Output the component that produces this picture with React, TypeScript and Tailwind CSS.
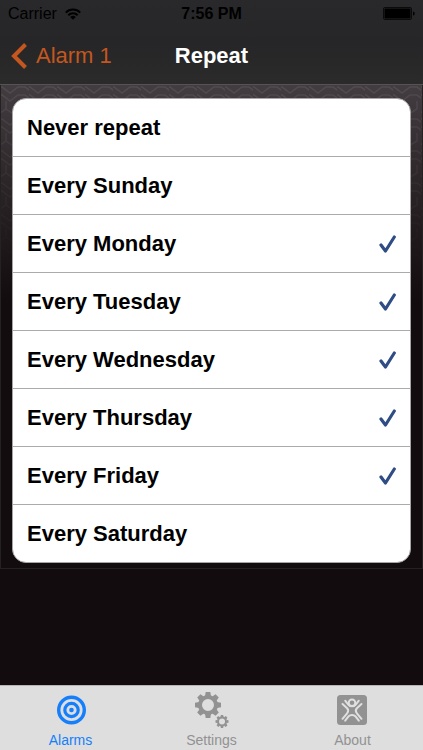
import { useState } from "react";
import type { ReactNode } from "react";

const OPTIONS = [
  "Never repeat",
  "Every Sunday",
  "Every Monday",
  "Every Tuesday",
  "Every Wednesday",
  "Every Thursday",
  "Every Friday",
  "Every Saturday",
];

const WifiIcon = () => (
  <svg className="h-3 w-4" viewBox="0 0 16 12" fill="none" stroke="#000" strokeWidth="2" aria-hidden="true">
    <path d="M.8 4.6a10.2 10.2 0 0 1 14.4 0" />
    <path d="M3.3 7.3a6.7 6.7 0 0 1 9.4 0" />
    <path d="M8 11.8 5.2 9a4 4 0 0 1 5.6 0z" fill="#000" stroke="none" />
  </svg>
);

const BatteryIcon = () => (
  <svg className="h-3.5 w-8" viewBox="0 0 32 14" aria-hidden="true">
    <rect x=".5" y=".5" width="28" height="12" rx="1.5" fill="none" stroke="#0b0b0b" />
    <rect x="1.5" y="1.5" width="26" height="10" rx="1" />
    <path d="M30 4.5c2.2 0 2.2 4 0 4z" />
  </svg>
);

const CheckIcon = () => (
  <svg
    className="h-5 w-4.5 opacity-0 peer-checked:opacity-100"
    viewBox="0 0 18 20"
    fill="none"
    stroke="#2f4d84"
    strokeWidth="3.2"
    strokeLinecap="round"
    strokeLinejoin="round"
    aria-hidden="true"
  >
    <path d="M3 11 7.5 17 16.3 3" />
  </svg>
);

const AlarmsIcon = () => (
  <svg className="size-9" viewBox="0 0 36 36" fill="none" stroke="currentColor" aria-hidden="true">
    <circle cx="18.5" cy="18" r="12.8" strokeWidth="3.4" />
    <circle cx="18.5" cy="18" r="6.7" strokeWidth="3.2" />
    <circle cx="18.5" cy="18" r="2.3" fill="currentColor" stroke="none" />
  </svg>
);

const TEETH = [0, 45, 90, 135, 180, 225, 270, 315];

const Gear = ({ cx, cy, scale }: { cx: number; cy: number; scale: number }) => (
  <g transform={`translate(${cx} ${cy}) scale(${scale})`}>
    <circle r="8" fill="none" stroke="currentColor" strokeWidth="4" />
    {TEETH.map((angle) => (
      <path key={angle} d="M-3-9 -2.3-13H2.3L3-9z" fill="currentColor" transform={`rotate(${angle})`} />
    ))}
  </g>
);

const SettingsIcon = () => (
  <svg className="size-9" viewBox="0 0 36 36" aria-hidden="true">
    <Gear cx={14} cy={13} scale={1} />
    <Gear cx={28} cy={29.5} scale={0.5} />
  </svg>
);

const AboutIcon = () => (
  <svg className="size-9" viewBox="0 0 36 36" fill="none" stroke="#e0e0e0" strokeWidth="2" strokeLinecap="round" strokeLinejoin="round" aria-hidden="true">
    <rect x="2" y="3" width="30" height="30" rx="3.5" fill="#929292" stroke="none" />
    <circle cx="17" cy="10.8" r="3.3" />
    <path d="M10.2 8.7l3.3 4.1c1.7 2 5.3 2 7 0l3.3-4.1" />
    <path d="M7.5 12l4.6 4.2c1.3 1.5 1.3 3.6 0 5.1L7.5 26.8" />
    <path d="M26.5 12l-4.6 4.2c-1.3 1.5-1.3 3.6 0 5.1l4.6 5.5" />
    <path d="M10.2 28.6l3.3-4.2c1.7-2 5.3-2 7 0l3.3 4.2" />
  </svg>
);

const TextureBackground = () => (
  <svg className="absolute inset-x-0 top-0 h-48 w-full" aria-hidden="true">
    <defs>
      <pattern id="zigzag" width="28" height="32" patternUnits="userSpaceOnUse">
        <path
          d="M-4 2H1L9 8 17 2H24L32 8M-4 8 1 10 9 16 17 10H24L32 16M5 16V24L-4 30M5 24 14 30 24 24V16"
          fill="none"
          stroke="#fff"
          strokeOpacity=".08"
          strokeWidth="1.5"
        />
      </pattern>
      <linearGradient id="fade" x1="0" y1="0" x2="0" y2="1">
        <stop offset="0" stopColor="#fff" />
        <stop offset="1" stopColor="#000" />
      </linearGradient>
      <mask id="fadeMask">
        <rect width="100%" height="100%" fill="url(#fade)" />
      </mask>
    </defs>
    <rect width="100%" height="100%" fill="url(#zigzag)" mask="url(#fadeMask)" />
  </svg>
);

const TabLink = ({ label, active, children }: { label: string; active?: boolean; children: ReactNode }) => (
  <a
    href="#"
    aria-current={active ? "page" : undefined}
    className={`flex flex-1 flex-col items-center gap-1 pt-1.5 text-sm leading-4 ${active ? "text-[#157efb]" : "text-[#929292]"}`}
  >
    {children}
    <span>{label}</span>
  </a>
);

export default function App() {
  const [selected, setSelected] = useState([2, 3, 4, 5, 6]);

  const toggle = (index: number) => {
    setSelected((prev) => {
      if (index === 0) return [0];
      const days = prev.filter((day) => day !== 0);
      return days.includes(index) ? days.filter((day) => day !== index) : [...days, index];
    });
  };

  return (
    <div className="flex min-h-screen flex-col bg-[#120c0e] font-['Liberation_Sans',Arial,sans-serif]">
      <header className="border-b border-[#555354] bg-linear-to-b from-[#29292b] via-[#262527] to-[#2b2b2b]">
        <div className="grid h-7 grid-cols-3 items-center px-2 text-base leading-5 text-black">
          <div className="flex items-center gap-2">
            <span>Carrier</span>
            <WifiIcon />
          </div>
          <span className="text-center font-bold">7:56 PM</span>
          <div className="flex justify-end">
            <BatteryIcon />
          </div>
        </div>
        <div className="grid h-14 grid-cols-3 items-center px-2.5 text-[22px] leading-7">
          <a href="#" className="flex items-center gap-2 text-[#c4571f]">
            <svg className="h-7 w-4.5" viewBox="0 0 18 28" fill="none" stroke="currentColor" strokeWidth="4" aria-hidden="true">
              <path d="M15.5 2.5 4 14l11.5 11.5" />
            </svg>
            <span>Alarm 1</span>
          </a>
          <h1 className="text-center font-bold text-white">Repeat</h1>
        </div>
      </header>

      <main className="relative border border-t-0 border-[#252022] bg-linear-to-b from-[#433d41] to-[#120c0e] to-45% px-[11px] pt-[13px] pb-[5px]">
        <TextureBackground />
        <ul className="relative overflow-hidden rounded-[14px] border border-[#a5a5a5] bg-white">
          {OPTIONS.map((option, index) => (
            <li key={option} className="border-b border-[#ababab] last:border-b-0">
              <label className="flex h-[57px] items-center justify-between px-3.5 text-[22px] leading-7 font-bold text-black">
                <span>{option}</span>
                <input
                  type="checkbox"
                  className="peer sr-only"
                  checked={selected.includes(index)}
                  onChange={() => toggle(index)}
                />
                <CheckIcon />
              </label>
            </li>
          ))}
        </ul>
      </main>

      <nav className="mt-auto flex h-[65px] border-t border-[#b9b3b4] bg-[#dedede]">
        <TabLink label="Alarms" active>
          <AlarmsIcon />
        </TabLink>
        <TabLink label="Settings">
          <SettingsIcon />
        </TabLink>
        <TabLink label="About">
          <AboutIcon />
        </TabLink>
      </nav>
    </div>
  );
}
